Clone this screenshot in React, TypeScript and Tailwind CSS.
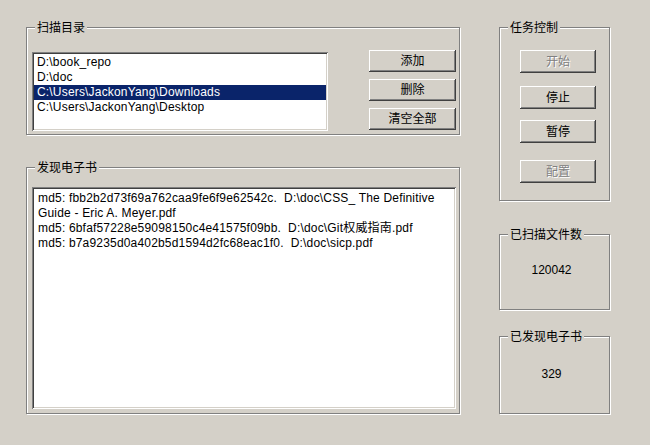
import React from 'react';

const font = "font-['Liberation_Sans','Noto_Sans_CJK_SC',sans-serif]";
const sunken = 'bg-white shadow-[inset_1px_1px_0_#808080,inset_-1px_-1px_0_#fff,inset_2px_2px_0_#404040,inset_-2px_-2px_0_#d4d0c8]';
const raised = 'shadow-[inset_-1px_-1px_0_#404040,inset_1px_1px_0_#fff,inset_-2px_-2px_0_#808080,inset_2px_2px_0_#d4d0c8]';

function GroupBox({ label, className, children }: { label: string; className?: string; children?: React.ReactNode }) {
  return (
    <div className={`relative border border-[#808080] shadow-[1px_1px_0_#fff,inset_1px_1px_0_#fff] ${className ?? ''}`}>
      <span className="absolute -top-[7px] left-[8px] bg-[#d4d0c8] px-[2px] text-[12px] leading-[15px] text-black">{label}</span>
      {children}
    </div>
  );
}

function Button({ label, disabled, className }: { label: string; disabled?: boolean; className?: string }) {
  return (
    <div
      className={`flex items-center justify-center bg-[#d4d0c8] text-[12px] leading-none ${raised} ${
        disabled ? 'text-[#808080] [text-shadow:1px_1px_0_#fff]' : 'text-black'
      } ${className ?? ''}`}
    >
      {label}
    </div>
  );
}

const dirs = ['D:\\book_repo', 'D:\\doc', 'C:\\Users\\JackonYang\\Downloads', 'C:\\Users\\JackonYang\\Desktop'];

const found = [
  'md5: fbb2b2d73f69a762caa9fe6f9e62542c.  D:\\doc\\CSS_ The Definitive',
  'Guide - Eric A. Meyer.pdf',
  'md5: 6bfaf57228e59098150c4e41575f09bb.  D:\\doc\\Git权威指南.pdf',
  'md5: b7a9235d0a402b5d1594d2fc68eac1f0.  D:\\doc\\sicp.pdf',
];

export default function App() {
  return (
    <div className={`flex h-[445px] w-[650px] bg-[#d4d0c8] pl-[26px] pt-[27px] ${font}`}>
      {/* left column */}
      <div className="flex w-[434px] flex-col">
        <GroupBox label="扫描目录" className="h-[108px]">
          <div className="flex items-start pl-[5px] pt-[22px]">
            <div className={`mt-[2px] h-[79px] w-[296px] px-[2px] pt-[3px] ${sunken}`}>
              {dirs.map((d, i) => (
                <div
                  key={d}
                  className={`h-[15px] whitespace-pre pl-[3px] text-[12px] leading-[15px] tracking-[0.18px] ${
                    i === 2 ? 'bg-[#0a246a] text-white' : 'text-black'
                  }`}
                >
                  {d}
                </div>
              ))}
            </div>
            <div className="ml-[41px] flex flex-col gap-[7px]">
              <Button label="添加" className="h-[22px] w-[87px]" />
              <Button label="删除" className="h-[22px] w-[87px]" />
              <Button label="清空全部" className="h-[22px] w-[87px]" />
            </div>
          </div>
        </GroupBox>

        <GroupBox label="发现电子书" className="mt-[32px] h-[247px]">
          <div className="pl-[5px] pt-[19px]">
            <div className={`h-[222px] w-[424px] px-[6px] pt-[4px] ${sunken}`}>
              {found.map((l, i) => (
                <div key={i} className="h-[15px] whitespace-pre text-[12px] leading-[15px] tracking-[0.18px] text-black">
                  {l}
                </div>
              ))}
            </div>
          </div>
        </GroupBox>
      </div>

      {/* right column */}
      <div className="ml-[39px] flex w-[111px] flex-col">
        <GroupBox label="任务控制" className="h-[174px]">
          <div className="flex flex-col pl-[20px] pt-[22px]">
            <Button label="开始" disabled className="h-[23px] w-[76px]" />
            <Button label="停止" className="mt-[13px] h-[23px] w-[76px]" />
            <Button label="暂停" className="mt-[11px] h-[23px] w-[76px]" />
            <Button label="配置" disabled className="mt-[17px] h-[23px] w-[76px]" />
          </div>
        </GroupBox>

        <GroupBox label="已扫描文件数" className="mt-[33px] h-[76px]">
          <div className="pr-[6px] pt-[28px] text-center text-[12px] leading-[15px] text-black">120042</div>
        </GroupBox>

        <GroupBox label="已发现电子书" className="mt-[26px] h-[78px]">
          <div className="pr-[6px] pt-[30px] text-center text-[12px] leading-[15px] text-black">329</div>
        </GroupBox>
      </div>
    </div>
  );
}
